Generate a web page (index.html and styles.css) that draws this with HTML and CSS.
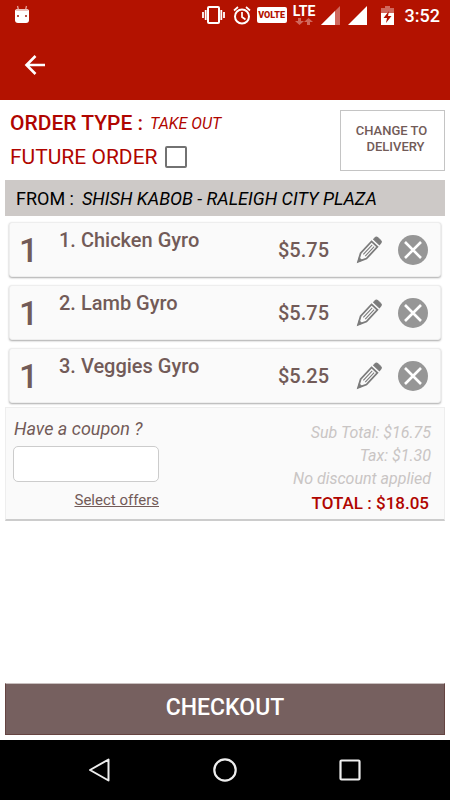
FILE: index.html
```html
<!DOCTYPE html>
<html lang="en">
<head>
<meta charset="utf-8">
<meta name="viewport" content="width=device-width, initial-scale=1">
<title>Your order</title>
<link rel="stylesheet" href="styles.css">
</head>
<body>
<svg class="defs" aria-hidden="true">
  <symbol id="pencil" viewBox="0 0 26 26">
    <g transform="rotate(43 13 13)" fill="none" stroke="#7c7c7c" stroke-width="1.800">
      <path d="M9 2V0Q9-2 11-2h4q2 0 2 2v2z" fill="#7c7c7c" stroke-width="1"/>
      <path d="M9 5h8v16L13 29l-4-8z"/>
      <path d="M11.800 7v13M14.400 7v13" stroke-width="1.100"/>
      <path d="M11.300 25.500h3.400L13 29z" fill="#7c7c7c" stroke-width="1"/>
    </g>
  </symbol>
  <symbol id="remove" viewBox="0 0 30 30">
    <circle cx="15" cy="15" r="15" fill="#969696"/>
    <path d="M7 7l16 16M23 7L7 23" stroke="#fff" stroke-width="2.600"/>
  </symbol>
</svg>
<div class="screen">
  <header class="header">
    <div class="status">
      <svg class="droid" width="16" height="18" viewBox="0 0 16 18"><path d="M3.500 0l1 4M12.500 0l-1 4" stroke="#e3a198" stroke-width="1.300"/><path d="M1 5q0-2 3-2h8q3 0 3 2v9q0 3-3 3H4q-3 0-3-3z" fill="#fff"/><path d="M2 5q0-2 2-2h8q2 0 2 2z" fill="#ecc0ba"/><path d="M3 9h2v2H3zM11 9h2v2h-2z" fill="#b85549"/></svg>
      <svg class="vibrate" width="23" height="18" viewBox="0 0 23 18"><rect x="6" y="1" width="11" height="16" rx="1" fill="none" stroke="#fff" stroke-width="2"/><path d="M3.700 4v10M19.300 4v10M1 6v6M22 6v6" stroke="#fff" stroke-width="1.800"/></svg>
      <svg class="alarm" width="18" height="19" viewBox="0 0 18 19"><circle cx="9" cy="10.500" r="7" fill="none" stroke="#fff" stroke-width="2"/><path d="M1 4.500L5 1M17 4.500L13 1M9 6v5l3.500 2.500" fill="none" stroke="#fff" stroke-width="1.700"/></svg>
      <span class="volte">VOLTE</span>
      <span class="lte">LTE
        <svg width="18" height="7" viewBox="0 0 18 7"><path d="M3 0h3v3h3L4.500 7 0 3h3zM12 7h3V4h3l-4.500-4L9 4h3z" fill="#d0685d"/></svg>
      </span>
      <svg class="signal" width="19" height="19" viewBox="0 0 19 19"><path d="M0 19L19 0v19z" fill="#d0685d"/><path d="M0 19L14 5v14z" fill="#fff"/></svg>
      <svg class="signal-full" width="19" height="19" viewBox="0 0 19 19"><path d="M0 19L19 0v19z" fill="#fff"/></svg>
      <svg class="battery" width="13" height="19" viewBox="0 0 13 19"><path d="M0 2h4V0h5v2h4v6H0z" fill="#d0685d"/><path d="M0 7h13v12H0z" fill="#fff"/><path d="M8 5L2.500 12H6l-1 5 5.500-7H7z" fill="#b31200"/></svg>
      <time class="time">3:52</time>
    </div>
    <button class="back" type="button" aria-label="Back"><svg width="20" height="20" viewBox="0 0 20 20"><path d="M20 10H2M10.500 1L1.500 10l9 9" fill="none" stroke="#fff" stroke-width="2.600"/></svg></button>
  </header>

  <main class="main">
    <section class="order">
      <div class="order-info">
        <p class="order-type"><strong>ORDER TYPE :</strong><em>TAKE OUT</em></p>
        <label class="future">FUTURE ORDER<input type="checkbox" class="check"></label>
      </div>
      <button class="change" type="button">CHANGE TO<span>DELIVERY</span></button>
    </section>
    <p class="from">FROM :<em>SHISH KABOB - RALEIGH CITY PLAZA</em></p>
    <ul class="items">
      <li class="item"><span class="qty">1</span><span class="name">1. Chicken Gyro</span><span class="price">$5.75</span><button class="icon edit" type="button" aria-label="Edit"><svg width="26" height="26"><use href="#pencil"/></svg></button><button class="icon" type="button" aria-label="Remove"><svg width="30" height="30"><use href="#remove"/></svg></button></li>
      <li class="item"><span class="qty">1</span><span class="name">2. Lamb Gyro</span><span class="price">$5.75</span><button class="icon edit" type="button" aria-label="Edit"><svg width="26" height="26"><use href="#pencil"/></svg></button><button class="icon" type="button" aria-label="Remove"><svg width="30" height="30"><use href="#remove"/></svg></button></li>
      <li class="item"><span class="qty">1</span><span class="name">3. Veggies Gyro</span><span class="price">$5.25</span><button class="icon edit" type="button" aria-label="Edit"><svg width="26" height="26"><use href="#pencil"/></svg></button><button class="icon" type="button" aria-label="Remove"><svg width="30" height="30"><use href="#remove"/></svg></button></li>
    </ul>
    <section class="summary">
      <div class="coupon">
        <label for="coupon">Have a coupon ?</label>
        <input id="coupon" type="text">
        <a href="#offers">Select offers</a>
      </div>
      <div class="totals">
        <p>Sub Total: $16.75</p>
        <p>Tax: $1.30</p>
        <p>No discount applied</p>
        <p class="total">TOTAL : $18.05</p>
      </div>
    </section>
    <button class="checkout" type="button">CHECKOUT</button>
  </main>

  <nav class="nav">
    <button type="button" aria-label="Back"><svg width="24" height="24" viewBox="0 0 24 24"><path d="M20.500 1.500v21L2 12z" fill="none" stroke="#eee" stroke-width="2" stroke-linejoin="round"/></svg></button>
    <button type="button" aria-label="Home"><svg width="24" height="24" viewBox="0 0 24 24"><circle cx="12" cy="12" r="10.700" fill="none" stroke="#eee" stroke-width="2.200"/></svg></button>
    <button type="button" aria-label="Recent apps"><svg width="24" height="24" viewBox="0 0 24 24"><rect x="2.500" y="2.500" width="19" height="19" rx="1" fill="none" stroke="#eee" stroke-width="2.200"/></svg></button>
  </nav>
</div>
</body>
</html>
```
FILE: styles.css
```css
* { box-sizing: border-box; }
body { margin: 0; background: #fff; color: #725b58; font-family: Roboto, "Liberation Sans", sans-serif; }
p, ul { margin: 0; padding: 0; }
button { padding: 0; border: 0; background: none; color: inherit; font-family: inherit; }
svg { display: block; overflow: visible; }
symbol { overflow: visible; }
.defs { position: absolute; width: 0; height: 0; }
.screen { display: flex; flex-direction: column; min-height: 100vh; }

.header { height: 100px; background: #b31200; color: #fff; }
.status { display: flex; align-items: center; height: 30px; padding: 0 10px 0 14px; }
.vibrate { margin-left: auto; }
.alarm { margin-left: 8px; }
.volte { margin-left: 6px; width: 30px; border-radius: 2px; background: #fff; color: #b31200; font-size: 9px; font-weight: 900; line-height: 16px; text-align: center; }
.lte { display: flex; flex-direction: column; align-items: center; margin-left: 6px; width: 23px; font-size: 14px; font-weight: 700; line-height: 13px; }
.signal { margin-left: 5px; }
.signal-full { margin-left: 8px; }
.battery { margin-left: 14px; }
.time { margin-left: 11px; font-size: 18px; font-weight: 500; }
.back { margin: 25px 0 0 25px; }

.main { display: flex; flex: 1; flex-direction: column; padding: 10px 5px 5px; }
.order { display: flex; justify-content: space-between; height: 70px; padding-left: 5px; color: #b00500; }
.order-type { display: flex; align-items: center; gap: 7px; height: 26px; font-size: 21px; }
.order-type strong { font-weight: 500; }
.order-type em { font-size: 16px; }
.future { display: flex; align-items: center; gap: 7px; height: 42px; font-size: 21px; }
.check { appearance: none; width: 22px; height: 22px; margin: 0; border: 2px solid #727272; border-radius: 2px; background: #fff; }
.change { width: 105px; height: 61px; padding: 0 2px 4px 0; border: 1px solid #c4c4c4; color: #725b58; font-size: 13px; font-weight: 500; line-height: 16px; }
.change span { display: block; padding-left: 8px; }
.from { display: flex; align-items: center; gap: 8px; height: 36px; padding-left: 11px; background: #cdc9c7; color: #000; font-size: 18px; }

.items { display: grid; gap: 8px; padding: 6px 4px 4px; list-style: none; }
.item { display: flex; align-items: center; height: 55px; padding: 1px 12px 0 9px; border: 1px solid #eee; border-radius: 3px; background: #fafafa; box-shadow: 0 1px 2px #aaa; }
.qty { width: 40px; font-size: 34px; font-weight: 500; }
.name { flex: 1; align-self: flex-start; padding-top: 4px; font-size: 20px; font-weight: 500; line-height: 24px; }
.price { font-size: 20px; font-weight: 500; }
.edit { margin: 0 16px 0 27px; }

.summary { display: flex; justify-content: space-between; height: 114px; padding: 9px 13px 0 7px; border: 1px solid #eee; border-bottom: 2px solid #ccc; background: #fafafa; }
.coupon { display: flex; flex-direction: column; width: 146px; }
.coupon label { padding-left: 1px; font-size: 18px; font-style: italic; line-height: 24px; }
.coupon input { width: 100%; height: 36px; margin-top: 5px; border: 1px solid #ccc; border-radius: 5px; background: #fff; }
.coupon a { margin-top: 8px; align-self: flex-end; color: inherit; font-size: 15px; line-height: 20px; }
.totals { padding-top: 4px; color: #c9c5c4; font-size: 16px; font-style: italic; line-height: 23px; text-align: right; }
.total { padding: 1px 2px 0 0; color: #b00500; font-size: 17px; font-style: normal; font-weight: 500; line-height: 24px; }
.checkout { height: 52px; margin-top: auto; padding-bottom: 4px; border: 1px solid #654442; border-top-color: #c8bfbe; background: #76605f; color: #fff; font-size: 23px; font-weight: 500; }

.nav { display: flex; justify-content: center; align-items: center; gap: 101px; height: 60px; background: #000; }
```
